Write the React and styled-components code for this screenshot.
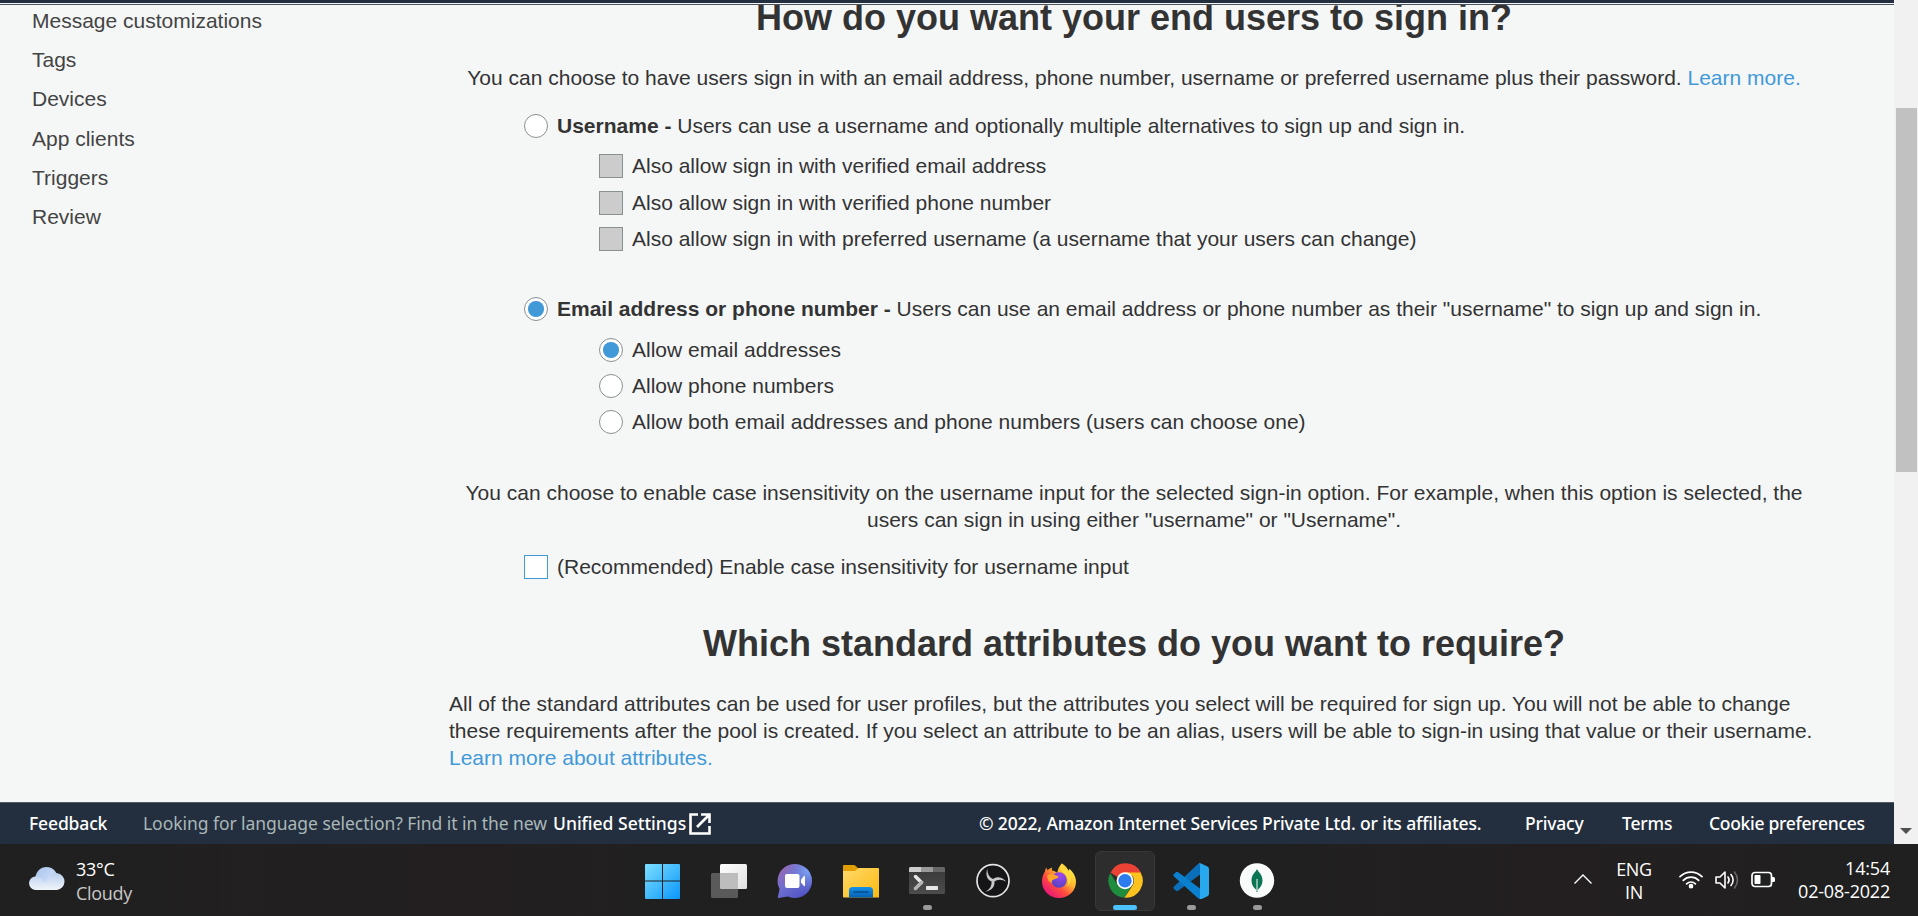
import React from "react";
import styled, { createGlobalStyle, css } from "styled-components";

const GlobalStyle = createGlobalStyle`
  *, *::before, *::after { box-sizing: border-box; }
  html, body { margin: 0; padding: 0; overflow: hidden; }
  p, h1, ul { margin: 0; padding: 0; }
`;

const Screen = styled.div`
  width: 1918px;
  height: 916px;
  display: flex;
  flex-direction: column;
  overflow: hidden;
  background: #f5f7f7;
`;

const BrowserArea = styled.div`
  display: flex;
  height: 844px;
`;

const Page = styled.div`
  width: 1894px;
  height: 844px;
  display: flex;
  flex-direction: column;
  font-family: "Liberation Sans", Arial, sans-serif;
  font-size: 21px;
  line-height: 27px;
  color: #333;
`;

const TopBar = styled.div`
  flex: none;
  height: 5px;
  border-bottom: 1px solid #4b545f;
  background: linear-gradient(#232f3e 3px, #f5f7f7 3px);
`;

const Body = styled.div`
  flex: none;
  height: 797px;
  display: flex;
  overflow: hidden;
`;

const SideNav = styled.ul`
  width: 449px;
  padding: 3px 0 0 32px;
  list-style: none;
`;

const NavItem = styled.li`
  height: 39.2px;
  line-height: 25px;
  color: #444;
`;

const Content = styled.main`
  width: 1370px;
  display: flex;
  flex-direction: column;
`;

const Title = styled.h1`
  font-size: 36px;
  line-height: 44px;
  font-weight: bold;
  text-align: center;
  margin-top: ${(p) => p.$top}px;
`;

const Paragraph = styled.p`
  text-align: ${(p) => p.$align || "center"};
  margin-top: ${(p) => p.$top}px;
  white-space: nowrap;
`;

const Link = styled.a`
  color: #4199d8;
`;

const Option = styled.label`
  display: flex;
  align-items: flex-start;
  gap: 9px;
  height: 24px;
  margin-top: ${(p) => p.$top}px;
  margin-left: ${(p) => (p.$nested ? 150 : 75)}px;
  line-height: 24px;
  white-space: pre;
`;

const Mark = styled.span`
  flex: none;
  width: 24px;
  height: 24px;
  border: 1px solid #8a9090;
  background: #fff;
  display: flex;
  align-items: center;
  justify-content: center;
`;

const RadioMark = styled(Mark)`
  border-radius: 50%;
  ${(p) =>
    p.$on &&
    css`
      &::after {
        content: "";
        width: 15.5px;
        height: 15.5px;
        border-radius: 50%;
        background: #4199d8;
      }
    `}
`;

const CheckMark = styled(Mark)`
  ${(p) => (p.$disabled ? "background: #ccc;" : "border-color: #4199d8;")}
`;

const Footer = styled.footer`
  flex: none;
  height: 42px;
  border-top: 1px solid #545b64;
  background: #232f3e;
  display: flex;
  align-items: center;
  padding: 0 30px 0 29px;
  font-family: "Noto Sans", "Open Sans", sans-serif;
  font-size: 17.5px;
  line-height: 24px;
  color: #fff;
  white-space: pre;

  svg {
    flex: none;
  }
`;

const FooterText = styled.span`
  flex: none;
  width: ${(p) => p.$width}px;
  margin-left: ${(p) => p.$left || 0}px;
  margin-top: -1px;
  letter-spacing: ${(p) => p.$spacing || 0}px;
  color: ${(p) => (p.$muted ? "#aab7b8" : "#fff")};
  font-weight: ${(p) => (p.$muted ? 400 : 500)};
`;

const ScrollTrack = styled.div`
  width: 24px;
  height: 844px;
  background: #f1f1f1;
  display: flex;
  flex-direction: column;
  align-items: center;
  justify-content: space-between;
  padding: 108px 0 10px;
`;

const ScrollThumb = styled.div`
  width: 21px;
  height: 364px;
  background: #c1c1c1;
`;

const Taskbar = styled.div`
  height: 72px;
  display: flex;
  background: linear-gradient(90deg, #202020 0, #231f20 480px, #202020 720px, #202020 1200px, #231f20 1560px, #202020 1918px);
  font-family: "Open Sans", "Noto Sans", sans-serif;
  font-size: 18px;
  color: #fff;
`;

const Weather = styled.div`
  flex: none;
  width: 633px;
  display: flex;
  gap: 11px;
  padding: 13px 0 0 29px;
`;

const Lines = styled.div`
  display: flex;
  flex-direction: column;
  flex: none;
  line-height: ${(p) => p.$line}px;
  text-align: ${(p) => p.$align || "left"};
  letter-spacing: ${(p) => p.$spacing || 0}px;
  width: ${(p) => (p.$width ? `${p.$width}px` : "auto")};
  margin: ${(p) => p.$top || 0}px ${(p) => p.$right || 0}px 0 0;
`;

const Dim = styled.span`
  color: #c8c8c8;
`;

const Apps = styled.div`
  flex: none;
  display: flex;
  gap: 6px;
  padding-top: 7px;
  width: 660px;
`;

const AppSlot = styled.div`
  flex: none;
  width: 60px;
  height: 60px;
  border-radius: 6px;
  border: 1px solid ${(p) => (p.$active ? "#383838" : "transparent")};
  background: ${(p) => (p.$active ? "#2d2d2d" : "transparent")};
  display: flex;
  flex-direction: column;
  align-items: center;
  padding-top: 11px;
`;

const Indicator = styled.span`
  flex: none;
  width: ${(p) => (p.$active ? 24 : 9)}px;
  height: 5px;
  margin-top: 6px;
  border-radius: 3px;
  background: ${(p) => (p.$active ? "#4cc2ff" : "#9a9a9a")};
`;

const Tray = styled.div`
  flex: 1;
  display: flex;
  align-items: flex-start;
  justify-content: flex-end;
  padding: 12px 28px 0 0;
`;

const TrayIcon = styled.span`
  flex: none;
  width: 24px;
  height: 24px;
  margin: 12px ${(p) => p.$right}px 0 0;
  display: flex;
`;

const ExternalIcon = () => (
  <svg width="22" height="22" viewBox="0 0 22 22" fill="none" stroke="#fff" strokeWidth="2.6">
    <path d="M9 1.500H1.500v19h19V13M12 1.500h8.500V10M20 2 8 14" />
  </svg>
);

const CloudIcon = () => (
  <svg width="36" height="48" viewBox="0 0 36 48">
    <defs>
      <linearGradient id="cloudBack" x1="0" y1="0" x2="1" y2="1">
        <stop offset="0" stopColor="#a9c4ee" />
        <stop offset="1" stopColor="#dbe7fa" />
      </linearGradient>
      <linearGradient id="cloudFront" x1="0" y1="0" x2="0" y2="1">
        <stop offset="0" stopColor="#b9cfee" />
        <stop offset="1" stopColor="#f1f5fb" />
      </linearGradient>
    </defs>
    <circle cx="17.5" cy="21" r="11" fill="url(#cloudBack)" />
    <path d="M7 33a6.800 6.800 0 1 1 5-11.300l4 3.500 3-3.500a8.500 8.500 0 1 1 9 11.300Z" fill="url(#cloudFront)" />
  </svg>
);

const Glyph = ({ children }) => (
  <svg width="36" height="36" viewBox="0 0 36 36">
    {children}
  </svg>
);

const WindowsIcon = () => (
  <Glyph>
    <defs>
      <linearGradient id="win" gradientUnits="userSpaceOnUse" x1="0" y1="0" x2="36" y2="36">
        <stop offset="0" stopColor="#7fe0ff" />
        <stop offset="1" stopColor="#0795fb" />
      </linearGradient>
    </defs>
    <path
      fill="url(#win)"
      d="M1 1h16v16.500H0V2a1 1 0 0 1 1-1ZM18 1h16a1 1 0 0 1 1 1v15.500H18ZM0 18.500h17V36H1a1 1 0 0 1-1-1ZM18 18.500h17V35a1 1 0 0 1-1 1H18Z"
    />
  </Glyph>
);

const TaskViewIcon = () => (
  <Glyph>
    <defs>
      <linearGradient id="tvFront" x1="0" y1="0" x2="1" y2="1">
        <stop offset="0" stopColor="#fff" />
        <stop offset="1" stopColor="#e0e0e0" />
      </linearGradient>
    </defs>
    <rect x="9" y="1" width="27" height="25" rx="1.500" fill="url(#tvFront)" />
    <rect x="0" y="10" width="27" height="25" rx="1.500" fill="#5a5a5a" />
    <path d="M9 10h17a1 1 0 0 1 1 1v15H10a1 1 0 0 1-1-1Z" fill="#bdbdbd" />
  </Glyph>
);

const ChatIcon = () => (
  <Glyph>
    <defs>
      <linearGradient id="chat" x1="0" y1="0.100" x2="0.800" y2="1">
        <stop offset="0" stopColor="#a06ab0" />
        <stop offset="0.450" stopColor="#6f6fcf" />
        <stop offset="1" stopColor="#4c50c4" />
      </linearGradient>
      <radialGradient id="chatGlow" cx="0.900" cy="0.200" r="0.700">
        <stop offset="0" stopColor="#79a7f5" />
        <stop offset="1" stopColor="#6b70d4" stopOpacity="0" />
      </radialGradient>
    </defs>
    <path d="M18 1a17 17 0 1 1-7 32.500L1.500 35a.6.6 0 0 1-.7-.8L2.600 26A17 17 0 0 1 18 1Z" fill="url(#chat)" />
    <path d="M18 1a17 17 0 1 1-7 32.500L1.500 35a.6.6 0 0 1-.7-.8L2.600 26A17 17 0 0 1 18 1Z" fill="url(#chatGlow)" />
    <rect x="8" y="11" width="14.500" height="14" rx="2" fill="#fff" />
    <path d="M24 16.500 27 13q1-.8 1 .5v9q0 1.300-1 .5L24 19.500Z" fill="#fff" />
  </Glyph>
);

const FolderIcon = () => (
  <Glyph>
    <defs>
      <linearGradient id="fold" x1="0" y1="0" x2="1" y2="1">
        <stop offset="0" stopColor="#ffd96b" />
        <stop offset="1" stopColor="#fcb90f" />
      </linearGradient>
      <linearGradient id="foldBlue" x1="0" y1="0" x2="0" y2="1">
        <stop offset="0" stopColor="#1592e6" />
        <stop offset="1" stopColor="#0561b5" />
      </linearGradient>
    </defs>
    <path d="M0 3a1 1 0 0 1 1-1h10.500l4 3.500V10H0Z" fill="#e09d04" />
    <path d="M0 8h12l3.500-3H35a1 1 0 0 1 1 1v28.500H1a1 1 0 0 1-1-1Z" fill="url(#fold)" />
    <path d="M6 34.500v-7a3.500 3.500 0 0 1 3.500-3.500h17a3.500 3.500 0 0 1 3.500 3.500v7Z" fill="url(#foldBlue)" />
    <path d="M11 29h14" stroke="#064b8e" strokeWidth="1.500" strokeLinecap="round" />
  </Glyph>
);

const TerminalIcon = () => (
  <Glyph>
    <defs>
      <linearGradient id="term" x1="0" y1="0" x2="0" y2="1">
        <stop offset="0" stopColor="#383838" />
        <stop offset="1" stopColor="#4c4c4c" />
      </linearGradient>
    </defs>
    <rect x="0" y="4" width="36" height="27" rx="1.500" fill="url(#term)" />
    <path d="M0 9V5.500A1.500 1.500 0 0 1 1.500 4H12v5Z" fill="#ccc" />
    <path d="M12 4h12v5H12Z" fill="#999" />
    <path d="M24 4h10.500A1.500 1.500 0 0 1 36 5.500V9H24Z" fill="#666" />
    <path d="m6.500 13.500 6 6" stroke="#e6e6e6" strokeWidth="3.500" strokeLinecap="round" />
    <path d="m6.500 25.500 6-6" stroke="#b3b3b3" strokeWidth="3.500" strokeLinecap="round" />
    <rect x="17" y="23" width="12" height="4" rx=".7" fill="#e6e6e6" />
  </Glyph>
);

const ObsIcon = () => (
  <Glyph>
    <circle cx="18" cy="17.700" r="16" fill="#151416" stroke="#e4e4e4" strokeWidth="1.700" />
    {[0, 120, 240].map((a) => (
      <path
        key={a}
        transform={`rotate(${a} 18 17.700)`}
        d="M18 18.800C13 18 9.800 13 12.300 5.500 12.300 11 14 14.300 19 16.500Z"
        fill="#c7c6c8"
      />
    ))}
  </Glyph>
);

const FirefoxIcon = () => (
  <Glyph>
    <defs>
      <linearGradient id="fox" x1="0.850" y1="0.100" x2="0.150" y2="0.900">
        <stop offset="0" stopColor="#fff14a" />
        <stop offset="0.350" stopColor="#ffb52b" />
        <stop offset="0.650" stopColor="#ff4a3f" />
        <stop offset="1" stopColor="#e8157c" />
      </linearGradient>
      <radialGradient id="foxGlobe" cx="0.600" cy="0.200" r="0.900">
        <stop offset="0" stopColor="#a145f2" />
        <stop offset="1" stopColor="#4c43b8" />
      </radialGradient>
    </defs>
    <path d="M20.500 0.500c3 1.800 5.800 4.500 7 8 .6-1 .7-1.800.6-2.800C32.500 9 35 14 35 18.500 35 28 27.500 35 18 35S1 27.800 1 18.500c0-4 1-7.200 3-10 0-1.500.4-2.800 1.200-4 .3 1.200.8 2 1.600 2.800C8 6 9.600 5 11.300 4.600c-.5 1-.6 2-.4 2.900 2 .2 3.800 1 5.200 2.200Q17.500 4 20.500.5Z" fill="url(#fox)" />
    <circle cx="18" cy="17" r="7.800" fill="url(#foxGlobe)" />
    <path d="M6.500 12c3.500-2.200 7.500-.5 10.500 1.200 1 .7.4 1.800-1 2l-4 1.500c-1 .8-1.600 2-1.400 3.500-3-1.500-4.900-4.500-4.100-8.200Z" fill="#ffa42a" />
    <path d="M21 .5c-2.500 4.500-1 7.500 2.500 10.500 4 3.500 4.500 8 2.500 13 3.500-3.200 5-8 3.500-13C27.500 6.500 24.500 3 21 .5Z" fill="#ffd83d" />
  </Glyph>
);

const ChromeIcon = () => (
  <Glyph>
    <path d="M3.500 9.500A17 17 0 0 1 34 10H18Q13 10 10.500 14Z" fill="#ea4335" />
    <path d="M3.200 9.900A17 17 0 0 0 17.500 34.700L25 22l-7 4q-5 0-7.500-4Z" fill="#1e8e3e" />
    <path d="M33.600 9.500H18l7.500 3.500q3 5 0 9.500L17.500 34.700A17 17 0 0 0 33.600 9.500Z" fill="#fcc31e" />
    <circle cx="18" cy="17.800" r="8.500" fill="#fff" />
    <circle cx="18" cy="17.800" r="6.700" fill="#2b7cee" />
  </Glyph>
);

const VsCodeIcon = () => (
  <Glyph>
    <path d="M1 23.500q-1.400 1.300 0 2.500l2 1.800q1 .8 2.200 0L27 11.500V.5L25 1Z" fill="#0a6fb8" />
    <path d="m1 11 2-1.800q1-.8 2.200 0L27 25.500V36l-2-.8L1 13.500q-1.400-1.300 0-2.500Z" fill="#0a80cf" />
    <path d="M25.500.7q.8-.8 2-.4l7 3.200Q36 4.200 36 6v25q0 1.500-1.500 2.300l-7 3.200q-1.200.3-2-.4 1.500.2 1.500-1.500V2.200q0-1.500-1.500-1.500Z" fill="#28a8ee" />
  </Glyph>
);

const MongoIcon = () => (
  <Glyph>
    <circle cx="18" cy="17.500" r="17.200" fill="#f9fafa" />
    <path d="M18 6c1 3 5.500 5 5.500 11.500 0 5-3 7.500-5 9.500V29h-1v-2c-2-2-5-4.500-5-9.500C12.500 11 17 9 18 6Z" fill="#0b7553" />
    <path d="M18 16v12" stroke="#c3dcd2" strokeWidth="1.300" />
  </Glyph>
);

const ChevronIcon = () => (
  <svg width="24" height="24" viewBox="0 0 24 24" fill="none" stroke="#fff" strokeWidth="1.400">
    <path d="m3.500 15.500 8.500-8.500 8.500 8.500" />
  </svg>
);

const WifiIcon = () => (
  <svg width="24" height="24" viewBox="0 0 24 24" fill="none" stroke="#fff" strokeWidth="1.700" strokeLinecap="round">
    <path d="M1 8.700a15.500 15.500 0 0 1 22 0M4.300 12.300a10.800 10.800 0 0 1 15.400 0M7.600 15.800a6.300 6.300 0 0 1 8.800 0" />
    <circle cx="12" cy="18.200" r="1.500" fill="#fff" />
  </svg>
);

const SpeakerIcon = () => (
  <svg width="24" height="24" viewBox="0 0 24 24" fill="none" stroke="#fff" strokeWidth="1.600" strokeLinecap="round" strokeLinejoin="round">
    <path d="M1 9h4l5-5v16l-5-5H1ZM13 9q2.200 3 0 6M16 6.500q4.200 5.500 0 11" />
    <path d="M19.500 4q6 8 0 16" stroke="#666" />
  </svg>
);

const BatteryIcon = () => (
  <svg width="24" height="24" viewBox="0 0 24 24">
    <rect x="1" y="4.500" width="19.500" height="14" rx="3" fill="none" stroke="#fff" strokeWidth="1.700" />
    <rect x="3.500" y="7" width="6" height="9" rx=".7" fill="#fff" />
    <path d="M21 9h1.500q1.500 0 1.500 1.500v2q0 1.500-1.500 1.500H21Z" fill="#fff" />
  </svg>
);

const apps = [
  { name: "start", Icon: WindowsIcon },
  { name: "tasks", Icon: TaskViewIcon },
  { name: "chat", Icon: ChatIcon },
  { name: "files", Icon: FolderIcon },
  { name: "terminal", Icon: TerminalIcon, running: true },
  { name: "obs", Icon: ObsIcon },
  { name: "firefox", Icon: FirefoxIcon },
  { name: "chrome", Icon: ChromeIcon, running: true, active: true },
  { name: "code", Icon: VsCodeIcon, running: true },
  { name: "compass", Icon: MongoIcon, running: true },
];

const navItems = ["Message customizations", "Tags", "Devices", "App clients", "Triggers", "Review"];

export default function App() {
  return (
    <Screen>
      <GlobalStyle />
      <BrowserArea>
        <Page>
          <TopBar />
          <Body>
            <SideNav>
              {navItems.map((item) => (
                <NavItem key={item}>{item}</NavItem>
              ))}
            </SideNav>
            <Content>
              <Title $top={-9}>How do you want your end users to sign in?</Title>
              <Paragraph $top={24}>
                You can choose to have users sign in with an email address, phone number, username or preferred username plus their
                password. <Link>Learn more.</Link>
              </Paragraph>
              <Option $top={23}>
                <RadioMark />
                <span>
                  <b>Username - </b>Users can use a username and optionally multiple alternatives to sign up and sign in.
                </span>
              </Option>
              <Option $top={16} $nested>
                <CheckMark $disabled />
                Also allow sign in with verified email address
              </Option>
              <Option $top={13} $nested>
                <CheckMark $disabled />
                Also allow sign in with verified phone number
              </Option>
              <Option $top={12} $nested>
                <CheckMark $disabled />
                Also allow sign in with preferred username (a username that your users can change)
              </Option>
              <Option $top={46}>
                <RadioMark $on />
                <span>
                  <b>Email address or phone number - </b>Users can use an email address or phone number as their "username" to sign up and
                  sign in.
                </span>
              </Option>
              <Option $top={17} $nested>
                <RadioMark $on />
                Allow email addresses
              </Option>
              <Option $top={12} $nested>
                <RadioMark />
                Allow phone numbers
              </Option>
              <Option $top={12} $nested>
                <RadioMark />
                Allow both email addresses and phone numbers (users can choose one)
              </Option>
              <Paragraph $top={45}>
                You can choose to enable case insensitivity on the username input for the selected sign-in option. For example, when this
                option is selected, the
                <br />
                users can sign in using either "username" or "Username".
              </Paragraph>
              <Option $top={22}>
                <CheckMark />
                (Recommended) Enable case insensitivity for username input
              </Option>
              <Title $top={43}>Which standard attributes do you want to require?</Title>
              <Paragraph $top={24} $align="left">
                All of the standard attributes can be used for user profiles, but the attributes you select will be required for sign up.
                You will not be able to change
                <br />
                these requirements after the pool is created. If you select an attribute to be an alias, users will be able to sign-in
                using that value or their username.
                <br />
                <Link>Learn more about attributes.</Link>
              </Paragraph>
            </Content>
          </Body>
          <Footer>
            <FooterText $width={114} $spacing={-0.15}>
              Feedback
            </FooterText>
            <FooterText $width={410} $spacing={-0.05} $muted>
              Looking for language selection? Find it in the new
            </FooterText>
            <FooterText $width={136}>Unified Settings</FooterText>
            <ExternalIcon />
            <FooterText $width={546} $left={268} $spacing={-0.13}>
              © 2022, Amazon Internet Services Private Ltd. or its affiliates.
            </FooterText>
            <FooterText $width={97} $spacing={-0.2}>
              Privacy
            </FooterText>
            <FooterText $width={87} $spacing={-0.15}>
              Terms
            </FooterText>
            <FooterText $width={155} $spacing={-0.3}>
              Cookie preferences
            </FooterText>
          </Footer>
        </Page>
        <ScrollTrack>
          <ScrollThumb />
          <svg width="12" height="6" viewBox="0 0 12 6">
            <path d="M0 0h12L6 6Z" fill="#505050" />
          </svg>
        </ScrollTrack>
      </BrowserArea>
      <Taskbar>
        <Weather>
          <CloudIcon />
          <Lines $line={24} $spacing={-0.3}>
            <span>33°C</span>
            <Dim>Cloudy</Dim>
          </Lines>
        </Weather>
        <Apps>
          {apps.map(({ name, Icon, running, active }) => (
            <AppSlot key={name} $active={active}>
              <Icon />
              {running && <Indicator $active={active} />}
            </AppSlot>
          ))}
        </Apps>
        <Tray>
          <TrayIcon $right={12}>
            <ChevronIcon />
          </TrayIcon>
          <Lines $line={23} $top={2} $align="center" $width={54} $right={18} $spacing={-0.3}>
            <span>ENG</span>
            <span>IN</span>
          </Lines>
          <TrayIcon $right={12}>
            <WifiIcon />
          </TrayIcon>
          <TrayIcon $right={12}>
            <SpeakerIcon />
          </TrayIcon>
          <TrayIcon $right={19}>
            <BatteryIcon />
          </TrayIcon>
          <Lines $line={23} $top={1} $align="right" $width={96} $spacing={-0.2}>
            <span>14:54</span>
            <span>02-08-2022</span>
          </Lines>
        </Tray>
      </Taskbar>
    </Screen>
  );
}
